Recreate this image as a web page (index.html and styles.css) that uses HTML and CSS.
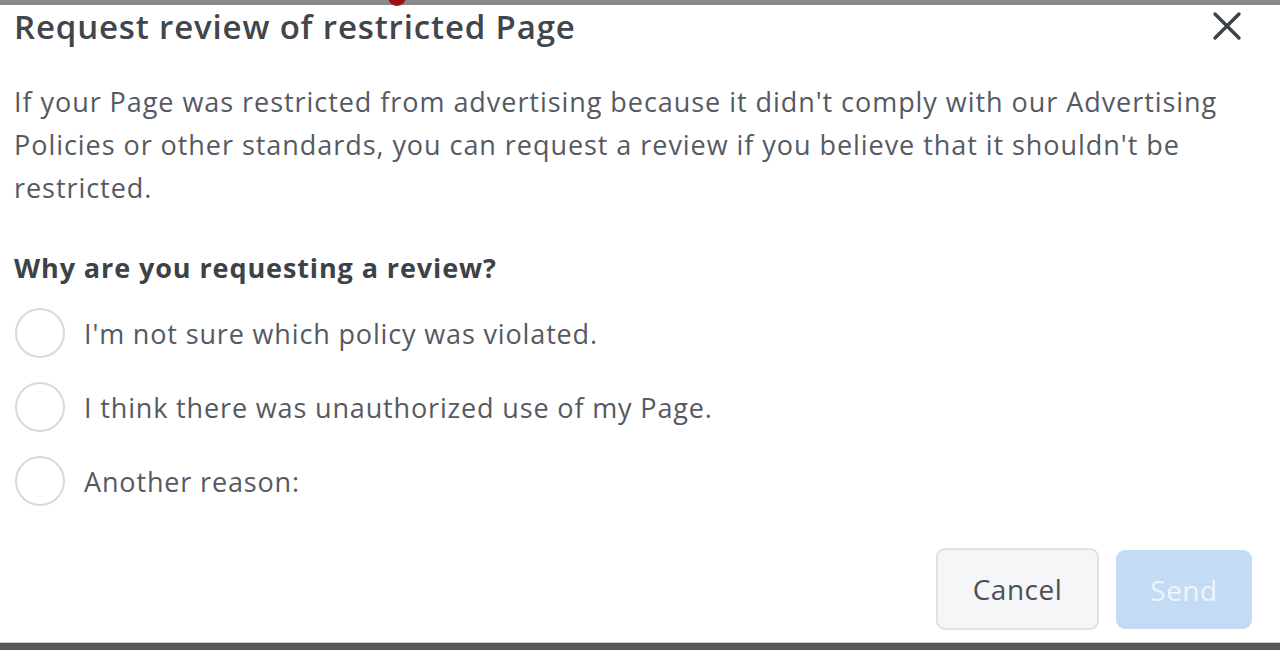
FILE: index.html
```html
<!DOCTYPE html>
<html lang="en">
<head>
  <meta charset="UTF-8" />
  <title>Request review of restricted Page</title>
  <link rel="stylesheet" href="styles.css">
</head>
<body>
  <div class="topstrip"><span class="dot"></span></div>

  <div class="dialog">
    <div class="dialog-head">
      <h1>Request review of restricted Page</h1>
      <button class="close" aria-label="Close">
        <svg width="30" height="30" viewBox="0 0 30 30"><path d="M3 3 L27 27 M27 3 L3 27" stroke="#3d4148" stroke-width="3.4" stroke-linecap="round"/></svg>
      </button>
    </div>

    <p class="intro">If your Page was restricted from advertising because it didn't comply with our Advertising Policies or other standards, you can request a review if you believe that it shouldn't be restricted.</p>

    <h2>Why are you requesting a review?</h2>

    <div class="options">
      <label class="option"><span class="radio"></span>I'm not sure which policy was violated.</label>
      <label class="option"><span class="radio"></span>I think there was unauthorized use of my Page.</label>
      <label class="option"><span class="radio"></span>Another reason:</label>
    </div>

    <div class="actions">
      <button class="btn cancel">Cancel</button>
      <button class="btn send">Send</button>
    </div>
  </div>

  <div class="bottomstrip"></div>
</body>
</html>
```

FILE: styles.css
```css
body {
  margin: 0;
  height: 650px;
  overflow: hidden;
  background: #fff;
  font-family: "Open Sans", "Noto Sans", sans-serif;
  color: #4b4f56;
  display: flex;
  flex-direction: column;
}

.topstrip {
  height: 5px;
  background: #8a8a8a;
  position: relative;
}

.topstrip .dot {
  position: absolute;
  left: 388px;
  top: -12px;
  width: 18px;
  height: 18px;
  border-radius: 50%;
  background: #a01010;
}

.dialog {
  flex: 1;
  padding: 0 28px 0 14px;
  display: flex;
  flex-direction: column;
}

.dialog-head {
  display: flex;
  justify-content: space-between;
  align-items: center;
  height: 42px;
}

h1 {
  margin: 0;
  font-size: 33px;
  font-weight: 600;
  color: #41454c;
  letter-spacing: 0.85px;
}

.close {
  background: none;
  border: none;
  padding: 0;
  margin-right: 10px;
  margin-top: 2px;
}

.intro {
  margin: 33px 0 0;
  max-width: 1230px;
  font-size: 27px;
  line-height: 43px;
  color: #555a62;
  letter-spacing: 0.95px;
}

h2 {
  margin: 40px 0 0;
  font-size: 27px;
  font-weight: 700;
  color: #3d4148;
  letter-spacing: 0.9px;
}

.options {
  display: flex;
  flex-direction: column;
  gap: 24px;
  margin-top: 22px;
}

.option {
  display: flex;
  align-items: center;
  gap: 19px;
  font-size: 27px;
  color: #555a62;
  letter-spacing: 0.85px;
}

.radio {
  width: 50px;
  height: 50px;
  border: 2px solid #d6d9de;
  border-radius: 50%;
  box-sizing: border-box;
  margin-left: 1px;
}

.actions {
  display: flex;
  justify-content: flex-end;
  gap: 17px;
  margin-top: auto;
  margin-bottom: 12px;
}

.btn {
  font-family: inherit;
  font-size: 28px;
  border-radius: 9px;
  height: 82px;
  letter-spacing: 0.5px;
}

.cancel {
  width: 163px;
  background: #f5f6f7;
  border: 2px solid #dfe1e5;
  color: #4b4f56;
}

.send {
  width: 136px;
  height: 79px;
  margin-top: 2px;
  background: #c3dcf3;
  border: none;
  color: #eef5fc;
}

.bottomstrip {
  height: 7px;
  background: #55585a;
  border-top: 1px solid #c8cacb;
}
```
